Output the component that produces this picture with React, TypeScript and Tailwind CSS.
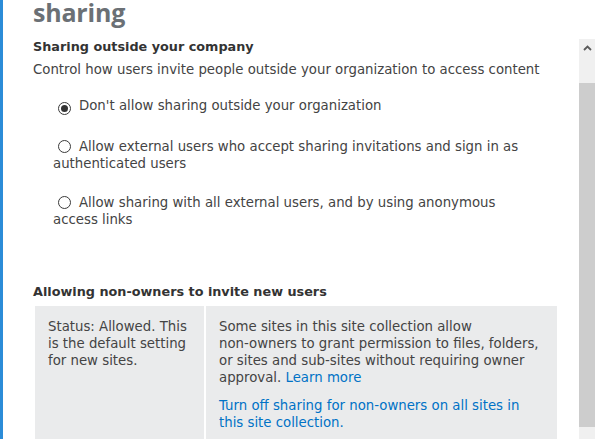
const options = [
  { label: "Don't allow sharing outside your organization", checked: true },
  {
    label: "Allow external users who accept sharing invitations and sign in as authenticated users",
    checked: false,
  },
  {
    label: "Allow sharing with all external users, and by using anonymous access links",
    checked: false,
  },
];

function Radio({ checked }: { checked: boolean }) {
  return (
    <span className="ml-[5px] mr-[8px] inline-flex h-[13px] w-[13px] items-center justify-center rounded-full border border-[#3a3a3a] bg-white align-[-2px]">
      {checked && <span className="h-[7px] w-[7px] rounded-full bg-[#333]" />}
    </span>
  );
}

export default function App() {
  return (
    <div className="flex h-[439px] w-[595px] overflow-hidden bg-white font-['DejaVu_Sans',sans-serif] text-[13.3px] leading-[17px] text-[#444]">
      <div className="w-[3px] shrink-0 bg-[#2b8cd8]" />

      <div className="flex-1 pl-[30px] pr-[22px]">
        <h1 className="h-[38px] font-['Open_Sans',sans-serif] text-[25px] font-bold leading-[24px] tracking-[-0.2px] text-[#6b7075]">
          sharing
        </h1>

        {/* Sharing outside */}
        <h2 className="text-[12.8px] font-bold text-[#333]">Sharing outside your company</h2>
        <p className="mt-[6px]">
          Control how users invite people outside your organization to access content
        </p>

        <div className="mt-[19px] pl-[20px] pr-[27px]">
          {options.map((o, i) => (
            <div key={i} className={i === 0 ? "" : i === 1 ? "mt-[23px]" : "mt-[22px]"}>
              <Radio checked={o.checked} />
              {o.label}
            </div>
          ))}
        </div>

        {/* Non-owners */}
        <h2 className="mt-[55px] text-[12.8px] font-bold text-[#333]">
          Allowing non-owners to invite new users
        </h2>
        <div className="ml-[2px] mt-[6px] flex gap-[2px]">
          <div className="w-[169px] shrink-0 bg-[#eaebec] pb-[40px] pl-[13px] pr-[8px] pt-[12px]">
            Status: Allowed. This is the default setting for new sites.
          </div>
          <div className="flex-1 bg-[#eaebec] pb-[40px] pl-[13px] pr-[14px] pt-[12px]">
            <p>
              Some sites in this site collection allow{" "}
              <span className="whitespace-nowrap">non-owners</span> to grant permission to files,
              folders, or sites and <span className="whitespace-nowrap">sub-sites</span> without
              requiring owner approval.{" "}
              <a href="#" className="text-[#0072c6]">
                Learn more
              </a>
            </p>
            <p className="mt-[11px]">
              <a href="#" className="text-[#0072c6]">
                Turn off sharing for <span className="whitespace-nowrap">non-owners</span> on all
                sites in this site collection.
              </a>
            </p>
          </div>
        </div>
      </div>

      {/* scrollbar */}
      <div className="mt-[39px] flex w-[16px] shrink-0 flex-col">
        <div className="flex h-[44px] justify-center bg-[#f0f0f0] pt-[6px]">
          <svg width="9" height="6" viewBox="0 0 9 6">
            <path d="M1 5 L4.5 1.5 L8 5" fill="none" stroke="#5a5a5a" strokeWidth="1.8" />
          </svg>
        </div>
        <div className="h-[344px] bg-[#cdcdcd]" />
        <div className="flex-1 bg-[#f0f0f0]" />
      </div>
    </div>
  );
}
